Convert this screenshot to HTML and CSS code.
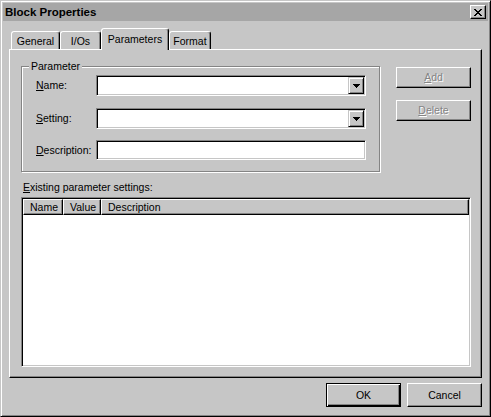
FILE: index.html
```html
<!DOCTYPE html>
<html>
<head>
<meta charset="utf-8">
<title>Block Properties</title>
<link rel="stylesheet" href="styles.css">
</head>
<body>
<div class="window">
  <div class="titlebar">
    <span class="title">Block Properties</span>
    <span class="close-btn"><svg width="8" height="7" viewBox="0 0 8 7" shape-rendering="crispEdges"><path fill="#000" d="M0 0h2v1H0z M6 0h2v1H6z M1 1h2v1H1z M5 1h2v1H5z M2 2h4v1H2z M3 3h2v1H3z M2 4h4v1H2z M1 5h2v1H1z M5 5h2v1H5z M0 6h2v1H0z M6 6h2v1H6z"/></svg></span>
  </div>
  <div class="client">
    <div class="tabs">
      <div class="tab tab-general">General</div>
      <div class="tab tab-ios">I/Os</div>
      <div class="tab tab-params is-active">Parameters</div>
      <div class="tab tab-format">Format</div>
    </div>
    <div class="panel">
      <div class="top-row">
        <div class="group">
          <span class="group-title">Parameter</span>
          <div class="field-row row-name">
            <span class="field-label"><u>N</u>ame:</span>
            <div class="combo"><span class="drop-btn"><svg width="7" height="4" viewBox="0 0 7 4" shape-rendering="crispEdges"><path fill="#000" d="M0 0h7v1H0z M1 1h5v1H1z M2 2h3v1H2z M3 3h1v1H3z"/></svg></span></div>
          </div>
          <div class="field-row row-setting">
            <span class="field-label"><u>S</u>etting:</span>
            <div class="combo"><span class="drop-btn"><svg width="7" height="4" viewBox="0 0 7 4" shape-rendering="crispEdges"><path fill="#000" d="M0 0h7v1H0z M1 1h5v1H1z M2 2h3v1H2z M3 3h1v1H3z"/></svg></span></div>
          </div>
          <div class="field-row row-desc">
            <span class="field-label"><u>D</u>escription:</span>
            <div class="textbox"></div>
          </div>
        </div>
        <div class="side-buttons">
          <div class="btn btn-side is-disabled"><span><u>A</u>dd</span></div>
          <div class="btn btn-side btn-delete is-disabled"><span><u>D</u>elete</span></div>
        </div>
      </div>
      <div class="list-label"><u>E</u>xisting parameter settings:</div>
      <div class="list">
        <div class="list-header">
          <div class="col col-name">Name</div>
          <div class="col col-value">Value</div>
          <div class="col col-desc">Description</div>
        </div>
      </div>
    </div>
    <div class="footer">
      <div class="btn btn-foot btn-default">OK</div>
      <div class="btn btn-foot">Cancel</div>
    </div>
  </div>
</div>
</body>
</html>
```

FILE: styles.css
```css
html, body {
  margin: 0;
  padding: 0;
  background: #c6c6c6;
}

body {
  font-family: "Liberation Sans", Arial, sans-serif;
  font-size: 10.5px;
  color: #000;
}

.window {
  box-sizing: border-box;
  width: 491px;
  height: 417px;
  border: 1px solid;
  border-color: #c6c6c6 #000 #000 #c6c6c6;
  box-shadow: inset 1px 1px 0 #fff, inset -1px -1px 0 #848484;
  padding: 2px;
  background: #c6c6c6;
  display: flex;
  flex-direction: column;
}

.titlebar {
  height: 18px;
  background: #a6a6a6;
  display: flex;
  align-items: center;
  padding-left: 2px;
}

.title {
  font-weight: bold;
  font-size: 11.5px;
  line-height: 14px;
}

.close-btn {
  box-sizing: border-box;
  margin-left: auto;
  margin-right: 2px;
  width: 16px;
  height: 14px;
  background: #c6c6c6;
  border: 1px solid;
  border-color: #fff #000 #000 #fff;
  box-shadow: inset -1px -1px 0 #848484;
  display: flex;
  align-items: center;
  justify-content: center;
}

.close-btn svg {
  display: block;
  margin-top: 1px;
}

.client {
  padding: 7px 6px 0 6px;
  display: flex;
  flex-direction: column;
}

/* Tabs */
.tabs {
  height: 21px;
  display: flex;
  align-items: flex-end;
  padding-left: 2px;
}

.tab {
  box-sizing: border-box;
  height: 18px;
  border: 1px solid;
  border-bottom: none;
  border-color: #fff #000 transparent #fff;
  border-radius: 3px 3px 0 0;
  box-shadow: inset -1px 0 0 #848484;
  background: #c6c6c6;
  text-align: center;
  line-height: 13px;
  padding-top: 3px;
}

.tab-general { width: 49px; }
.tab-ios { width: 41px; }
.tab-params { width: 68px; }
.tab-format { width: 42px; }

.tab.is-active {
  height: 22px;
  margin-bottom: -1px;
  padding-top: 4px;
  position: relative;
  z-index: 1;
}

/* Panel */
.panel {
  box-sizing: border-box;
  width: 473px;
  height: 329px;
  border: 1px solid;
  border-color: #fff #000 #000 #fff;
  box-shadow: inset -1px -1px 0 #848484;
  padding: 16px 10px 0 11px;
  display: flex;
  flex-direction: column;
}

.top-row {
  display: flex;
  align-items: flex-start;
}

.group {
  box-sizing: border-box;
  width: 359px;
  height: 106px;
  border: 1px solid #848484;
  box-shadow: inset 1px 1px 0 #fff, 1px 1px 0 #fff;
  padding-left: 14px;
  display: flex;
  flex-direction: column;
}

.group-title {
  align-self: flex-start;
  margin-top: -7px;
  margin-left: -7px;
  padding: 0 2px;
  line-height: 13px;
  background: #c6c6c6;
}

.field-row {
  display: flex;
  align-items: center;
}

.row-name { margin-top: 2px; }
.row-setting { margin-top: 12px; }
.row-desc { margin-top: 11px; }

.field-label {
  width: 60px;
  line-height: 13px;
}

u {
  text-decoration: underline;
  text-underline-offset: 1px;
}

.combo,
.textbox {
  box-sizing: border-box;
  width: 270px;
  height: 21px;
  background: #fff;
  border: 1px solid;
  border-color: #848484 #fff #fff #848484;
  box-shadow: inset 1px 1px 0 #000, inset -1px -1px 0 #c6c6c6;
}

.combo {
  padding: 1px;
  display: flex;
  justify-content: flex-end;
}

.textbox {
  height: 20px;
}

.drop-btn {
  box-sizing: border-box;
  width: 16px;
  height: 17px;
  background: #c6c6c6;
  border: 1px solid;
  border-color: #c6c6c6 #000 #000 #c6c6c6;
  box-shadow: inset 1px 1px 0 #fff, inset -1px -1px 0 #848484;
  display: flex;
  align-items: center;
  justify-content: center;
  padding-left: 1px;
}

.drop-btn svg { display: block; }

.side-buttons {
  margin-left: 16px;
  margin-top: 1px;
  display: flex;
  flex-direction: column;
}

.btn {
  box-sizing: border-box;
  width: 75px;
  background: #c6c6c6;
  border: 1px solid;
  border-color: #fff #000 #000 #fff;
  box-shadow: inset -1px -1px 0 #848484;
  display: flex;
  align-items: center;
  justify-content: center;
  line-height: 13px;
}

.btn-side { height: 21px; }
.btn-delete { margin-top: 12px; }

.btn.is-disabled {
  color: #848484;
  text-shadow: 1px 1px 0 #fff;
}

.list-label {
  margin-top: 9px;
  margin-left: 2px;
  line-height: 13px;
}

.list {
  box-sizing: border-box;
  margin-top: 3px;
  width: 450px;
  height: 170px;
  background: #fff;
  border: 1px solid;
  border-color: #848484 #fff #fff #848484;
  box-shadow: inset 1px 1px 0 #000, inset -1px -1px 0 #c6c6c6;
  padding: 1px;
}

.list-header {
  display: flex;
  height: 16px;
}

.col {
  box-sizing: border-box;
  height: 16px;
  background: #c6c6c6;
  border: 1px solid;
  border-color: #fff #000 #000 #fff;
  box-shadow: inset -1px -1px 0 #848484;
  padding-left: 6px;
  line-height: 14px;
  white-space: nowrap;
}

.col-name { width: 40px; }
.col-value { width: 38px; }
.col-desc { flex: 1; }

.footer {
  margin-top: 5px;
  display: flex;
  justify-content: flex-end;
  gap: 6px;
}

.btn-foot { height: 24px; }

.btn-default {
  border: 1px solid #000;
  box-shadow: inset 1px 1px 0 #fff, inset -1px -1px 0 #000, inset -2px -2px 0 #848484;
}
```
